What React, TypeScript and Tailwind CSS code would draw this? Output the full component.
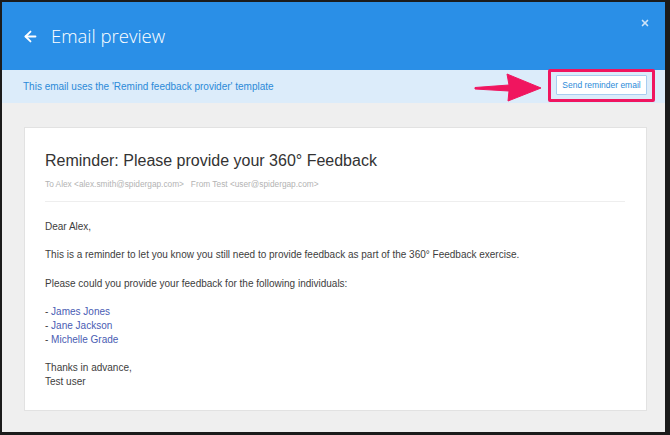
import React from "react";
import { ArrowLeft, X } from "lucide-react";

const people = ["James Jones", "Jane Jackson", "Michelle Grade"];

const App: React.FC = () => {
  return (
    <div className="w-[670px] h-[435px] bg-[#1b1b1b] pt-[2px] pl-[2px] pr-[5px] pb-[3px] font-['Liberation_Sans',Arial,sans-serif]">
      <div className="relative flex flex-col h-full">
        {/* Header */}
        <div className="relative h-[68px] bg-[#2a8fe7] flex items-center pl-[20px] text-white">
          <ArrowLeft className="w-[17px] h-[17px]" strokeWidth={2.6} />
          <h1 className="ml-[12px] text-[18.5px] font-light font-['Open_Sans',sans-serif] leading-none">Email preview</h1>
          <X className="absolute top-[16px] right-[15px] w-[10px] h-[10px] text-[#cfe4f8]" strokeWidth={4} />
        </div>

        {/* Template banner */}
        <div className="h-[33px] bg-[#dcecfa] flex items-center justify-between pl-[21px] pr-[10px]">
          <p className="text-[10px] text-[#2b8ad8]">This email uses the 'Remind feedback provider' template</p>
          <div className="relative z-10 h-[33px] -mt-[3px] border-[3px] border-[#f0155f] rounded-[2px] px-[5px] flex items-center">
            <button className="h-[20px] w-[91px] bg-white border border-[#a9cdf0] text-[8.5px] text-[#2b8ad8] rounded-[1px]">
              Send reminder email
            </button>
          </div>
        </div>

        {/* annotation arrow */}
        <svg className="absolute left-[471px] top-[69px] z-10" width="72" height="32" viewBox="0 0 72 32">
          <polygon points="2,16.5 36,14 34,3 68,17 35,30 36,20 2,18" fill="#f0155f" strokeLinejoin="round" stroke="#f0155f" strokeWidth="1" />
        </svg>

        {/* Email body */}
        <div className="flex-1 bg-[#efefef] pl-[22px] pr-[18px] pt-[24px] pb-[21px] flex">
          <div className="flex-1 bg-white border border-[#e2e2e2] pl-[20px] pr-[21px] pt-[23px]">
            <h2 className="text-[16px] text-[#333] leading-[20px]">Reminder: Please provide your 360° Feedback</h2>
            <p className="mt-[8px] text-[8.3px] text-[#b3b3b3] leading-[10px]">
              To Alex &lt;alex.smith@spidergap.com&gt;&nbsp;&nbsp;&nbsp;From Test &lt;user@spidergap.com&gt;
            </p>
            <div className="mt-[12px] border-t border-[#eeeeee]" />
            <div className="pt-[18px] text-[10px] leading-[14px] text-[#3d3d3d]">
              <p>Dear Alex,</p>
              <p className="mt-[14px]">This is a reminder to let you know you still need to provide feedback as part of the 360° Feedback exercise.</p>
              <p className="mt-[15px]">Please could you provide your feedback for the following individuals:</p>
              <ul className="mt-[14px]">
                {people.map((p) => (
                  <li key={p}>
                    - <a className="text-[#4a5cb3]">{p}</a>
                  </li>
                ))}
              </ul>
              <p className="mt-[14px]">Thanks in advance,</p>
              <p>Test user</p>
            </div>
          </div>
        </div>
      </div>
    </div>
  );
};

export default App;
